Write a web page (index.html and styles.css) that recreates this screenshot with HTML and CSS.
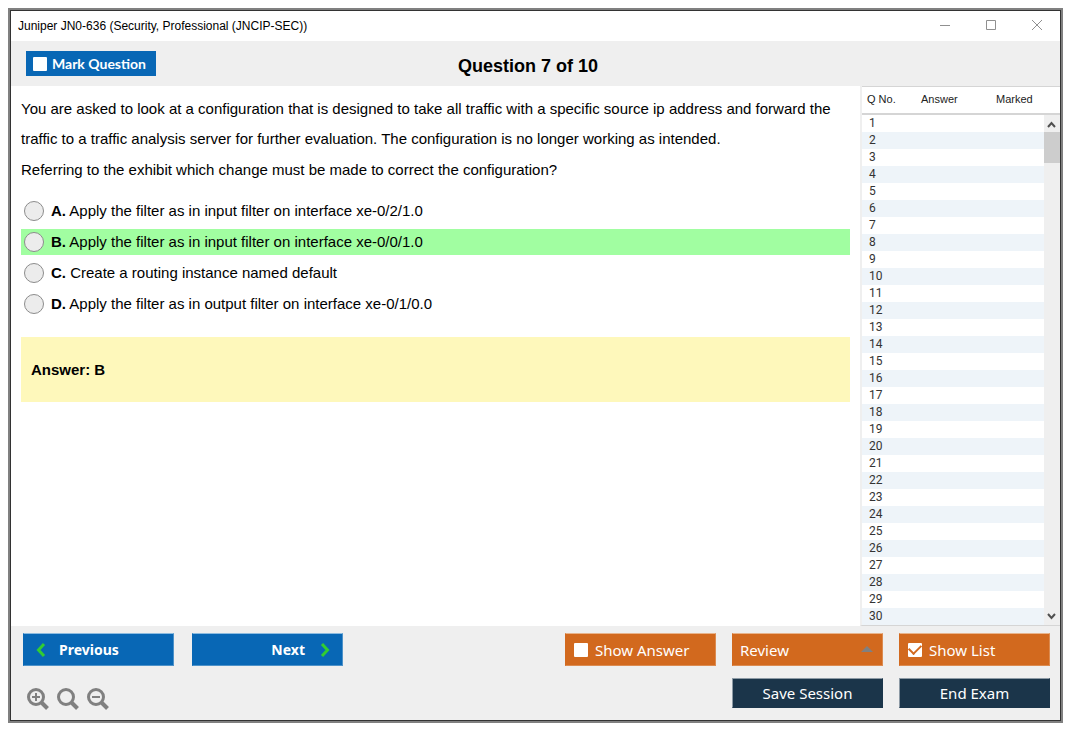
FILE: index.html
```html
<!DOCTYPE html>
<html lang="en">
<head>
    <meta charset="UTF-8">
    <meta name="viewport" content="width=device-width, initial-scale=1.0">
    <title>Juniper JN0-636 (Security, Professional (JNCIP-SEC))</title>
    <link rel="stylesheet" href="styles.css">
</head>
<body>
    <div class="window">
        <div class="titlebar">
            <span class="title">Juniper JN0-636 (Security, Professional (JNCIP-SEC))</span>
            <div class="window-buttons">
                <button type="button" aria-label="Minimize"><svg width="12" height="12" viewBox="0 0 12 12"><path d="M1 5.500h10"/></svg></button>
                <button type="button" aria-label="Maximize"><svg width="12" height="12" viewBox="0 0 12 12"><path d="M1.500 .500h9v9h-9z"/></svg></button>
                <button type="button" aria-label="Close"><svg width="12" height="12" viewBox="0 0 12 12"><path d="M1 0l10 10M11 0L1 10"/></svg></button>
            </div>
        </div>

        <div class="header">
            <label class="mark"><input type="checkbox" class="check"> Mark Question</label>
            <h1>Question 7 of 10</h1>
        </div>

        <div class="main">
            <div class="question">
                <p>You are asked to look at a configuration that is designed to take all traffic with a specific source ip address and forward the traffic to a traffic analysis server for further evaluation. The configuration is no longer working as intended.</p>
                <p>Referring to the exhibit which change must be made to correct the configuration?</p>
                <div class="options">
                    <label class="option"><input type="radio" name="answer"><span><b>A.</b> Apply the filter as in input filter on interface xe-0/2/1.0</span></label>
                    <label class="option correct"><input type="radio" name="answer"><span><b>B.</b> Apply the filter as in input filter on interface xe-0/0/1.0</span></label>
                    <label class="option"><input type="radio" name="answer"><span><b>C.</b> Create a routing instance named default</span></label>
                    <label class="option"><input type="radio" name="answer"><span><b>D.</b> Apply the filter as in output filter on interface xe-0/1/0.0</span></label>
                </div>
                <div class="answer">Answer: B</div>
            </div>

            <div class="list">
                <table>
                    <thead>
                        <tr><th class="col-no">Q No.</th><th class="col-answer">Answer</th><th>Marked</th></tr>
                    </thead>
                    <tbody>
                        <tr><td>1</td><td></td><td></td></tr>
                        <tr><td>2</td><td></td><td></td></tr>
                        <tr><td>3</td><td></td><td></td></tr>
                        <tr><td>4</td><td></td><td></td></tr>
                        <tr><td>5</td><td></td><td></td></tr>
                        <tr><td>6</td><td></td><td></td></tr>
                        <tr><td>7</td><td></td><td></td></tr>
                        <tr><td>8</td><td></td><td></td></tr>
                        <tr><td>9</td><td></td><td></td></tr>
                        <tr><td>10</td><td></td><td></td></tr>
                        <tr><td>11</td><td></td><td></td></tr>
                        <tr><td>12</td><td></td><td></td></tr>
                        <tr><td>13</td><td></td><td></td></tr>
                        <tr><td>14</td><td></td><td></td></tr>
                        <tr><td>15</td><td></td><td></td></tr>
                        <tr><td>16</td><td></td><td></td></tr>
                        <tr><td>17</td><td></td><td></td></tr>
                        <tr><td>18</td><td></td><td></td></tr>
                        <tr><td>19</td><td></td><td></td></tr>
                        <tr><td>20</td><td></td><td></td></tr>
                        <tr><td>21</td><td></td><td></td></tr>
                        <tr><td>22</td><td></td><td></td></tr>
                        <tr><td>23</td><td></td><td></td></tr>
                        <tr><td>24</td><td></td><td></td></tr>
                        <tr><td>25</td><td></td><td></td></tr>
                        <tr><td>26</td><td></td><td></td></tr>
                        <tr><td>27</td><td></td><td></td></tr>
                        <tr><td>28</td><td></td><td></td></tr>
                        <tr><td>29</td><td></td><td></td></tr>
                        <tr><td>30</td><td></td><td></td></tr>
                    </tbody>
                </table>
                <!-- scrollbar lies over the right edge of the rows -->
                <div class="scrollbar" aria-hidden="true">
                    <svg width="15" height="17" viewBox="0 0 15 17"><path d="M4 12l3.500-4L11 12"/></svg>
                    <div class="thumb"></div>
                    <svg width="15" height="17" viewBox="0 0 15 17"><path d="M4 6l3.500 4L11 6"/></svg>
                </div>
            </div>
        </div>

        <div class="footer">
            <div class="footer-left">
                <div class="nav">
                    <button type="button" class="btn blue prev"><svg width="10" height="16" viewBox="0 0 10 16"><path d="M8 2L2.500 8L8 14"/></svg>Previous</button>
                    <button type="button" class="btn blue next">Next<svg width="10" height="16" viewBox="0 0 10 16"><path d="M2 2l5.500 6L2 14"/></svg></button>
                </div>
                <div class="zoom">
                    <button type="button" aria-label="Zoom in"><svg width="22" height="22" viewBox="0 0 22 22"><circle cx="9" cy="9" r="7.500"/><path class="handle" d="M14.500 14.500l6 6"/><path class="sign" d="M5 9h8M9 5v8"/></svg></button>
                    <button type="button" aria-label="Reset zoom"><svg width="22" height="22" viewBox="0 0 22 22"><circle cx="9" cy="9" r="7.500"/><path class="handle" d="M14.500 14.500l6 6"/></svg></button>
                    <button type="button" aria-label="Zoom out"><svg width="22" height="22" viewBox="0 0 22 22"><circle cx="9" cy="9" r="7.500"/><path class="handle" d="M14.500 14.500l6 6"/><path class="sign" d="M5 9h8"/></svg></button>
                </div>
            </div>
            <div class="footer-right">
                <label class="btn orange"><input type="checkbox" class="check">Show Answer</label>
                <div class="review">
                    <select class="btn orange" aria-label="Review">
                        <option>Review</option>
                    </select>
                    <svg width="12" height="6" viewBox="0 0 12 6"><path d="M0 6l6-6l6 6z"/></svg>
                </div>
                <label class="btn orange"><input type="checkbox" class="check" checked>Show List</label>
                <button type="button" class="btn dark save">Save Session</button>
                <button type="button" class="btn dark">End Exam</button>
            </div>
        </div>
    </div>
</body>
</html>
```
FILE: styles.css
```css
* {
    box-sizing: border-box;
}
body {
    margin: 0;
    padding: 8px 12px 12px 8px;
    min-height: 100vh;
    display: flex;
    background-color: white;
    font-family: "Liberation Sans", Arial, sans-serif;
    font-size: 15px;
    color: #000;
}
button {
    font: inherit;
    border: none;
    padding: 0;
    background: none;
    cursor: pointer;
}
svg {
    display: block;
    fill: none;
}
.window {
    flex: 1;
    display: flex;
    flex-direction: column;
    border: 1px solid #333;
    outline: 2px solid #808080;
    margin: 2px;
    background-color: #efefef;
}
.titlebar {
    display: flex;
    align-items: center;
    justify-content: space-between;
    height: 30px;
    padding: 0 17px 0 7px;
    background-color: white;
}
.title {
    font-size: 12px;
}
.window-buttons {
    display: flex;
    gap: 34px;
}
.window-buttons svg {
    stroke: #909090;
}
.header {
    display: grid;
    grid-template-columns: 1fr auto 1fr;
    align-items: center;
    height: 45px;
    padding: 0 30px 0 15px;
}
.header h1 {
    margin: 0;
    padding-top: 6px;
    font-size: 18px;
}
.mark {
    justify-self: start;
    display: flex;
    align-items: center;
    gap: 5px;
    width: 130px;
    height: 25px;
    padding-left: 7px;
    background-color: #0867b5;
    color: white;
    font: bold 14px Lato, "Liberation Sans", sans-serif;
}
.check {
    appearance: none;
    flex: none;
    display: grid;
    place-items: center;
    width: 14px;
    height: 14px;
    margin: 0;
    border-radius: 1px;
    background-color: white;
}
.check:checked::after {
    content: "";
    width: 10px;
    height: 6px;
    margin-bottom: 3px;
    border-left: 2px solid #d2691e;
    border-bottom: 2px solid #d2691e;
    transform: rotate(-45deg);
}
.main {
    flex: 1;
    display: flex;
    background-color: white;
}
.question {
    flex: 1;
    padding: 8px 10px;
}
.question p {
    margin: 0 0 1px;
    line-height: 30px;
}
.options {
    display: flex;
    flex-direction: column;
    gap: 5px;
    margin-top: 13px;
}
.option {
    display: flex;
    align-items: center;
    gap: 7px;
    height: 26px;
    padding-left: 3px;
}
.option span {
    padding-bottom: 2px;
}
.option input {
    appearance: none;
    width: 20px;
    height: 20px;
    margin: 0;
    border: 1px solid #8c8c8c;
    border-radius: 50%;
    background-color: #ececec;
}
.option input:checked {
    box-shadow: inset 0 0 0 5px #ececec;
    background-color: #333;
}
.correct {
    background-color: #a1fea1;
}
.answer {
    margin-top: 20px;
    padding: 24px 10px;
    line-height: 17px;
    font-weight: bold;
    background-color: #fef8bb;
}
.list {
    position: relative;
    width: 200px;
    border-left: 2px solid #efefef;
    border-bottom: 1px solid #d5d5d5;
}
.list table {
    width: 100%;
    border-collapse: separate;
    border-spacing: 0;
    table-layout: fixed;
    color: #333;
}
.list th {
    height: 29px;
    padding: 0 0 2px 5px;
    border-top: 1px solid #d5d5d5;
    border-bottom: 2px solid #d5d5d5;
    font-size: 11px;
    font-weight: normal;
    text-align: left;
    color: #222;
}
.col-no {
    width: 54px;
}
.col-answer {
    width: 75px;
}
.list td {
    height: 17px;
    padding: 0 0 0 7px;
    font: 12px/17px Roboto, sans-serif;
}
.list tbody tr:nth-child(even) {
    background-color: #eef4f9;
}
.scrollbar {
    position: absolute;
    top: 29px;
    right: 0;
    bottom: 0;
    display: flex;
    flex-direction: column;
    justify-content: space-between;
    width: 16px;
    background-color: #efefef;
}
.scrollbar svg {
    stroke: #505050;
    stroke-width: 2;
}
.thumb {
    height: 31px;
    margin-bottom: auto;
    background-color: #cdcdcd;
}
.footer {
    display: flex;
    justify-content: space-between;
    padding: 7px 10px 10px 12px;
}
.btn {
    display: flex;
    align-items: center;
    gap: 7px;
    width: 151px;
    height: 33px;
    padding: 0 8px;
    border: 1px solid;
    border-radius: 0;
    color: white;
    font: 15px "Noto Sans", sans-serif;
}
.blue {
    background-color: #0867b5;
    border-color: #8dbce0 #4d92c9 #4d92c9 #0867b5;
    font: bold 14px "Noto Sans", sans-serif;
}
.blue svg {
    stroke: #32cd32;
    stroke-width: 3;
}
.orange {
    background-color: #d2691e;
    border-color: #e8b48c #dc8b50 #dc8b50 #d2691e;
}
.dark {
    justify-content: center;
    height: 30px;
    background-color: #1b354a;
    border-color: #8d9aa5 #1b354a #1b354a #8d9aa5;
}
.nav {
    display: flex;
    gap: 18px;
}
.prev {
    gap: 13px;
    padding-left: 12px;
}
.next {
    justify-content: flex-end;
    gap: 15px;
    padding-right: 12px;
}
.zoom {
    display: flex;
    gap: 8px;
    margin-top: 22px;
    padding-left: 4px;
}
.zoom svg {
    stroke: #808080;
    stroke-width: 3;
}
.zoom .handle {
    stroke-width: 4;
}
.zoom .sign {
    stroke-width: 2;
}
.footer-right {
    display: grid;
    grid-template-columns: repeat(3, auto);
    gap: 12px 16px;
    align-content: start;
}
.review {
    position: relative;
}
.review select {
    appearance: none;
    padding: 0 7px;
}
.review svg {
    position: absolute;
    right: 10px;
    top: 13px;
    fill: #808080;
    pointer-events: none;
}
.save {
    grid-column: 2;
}
```
